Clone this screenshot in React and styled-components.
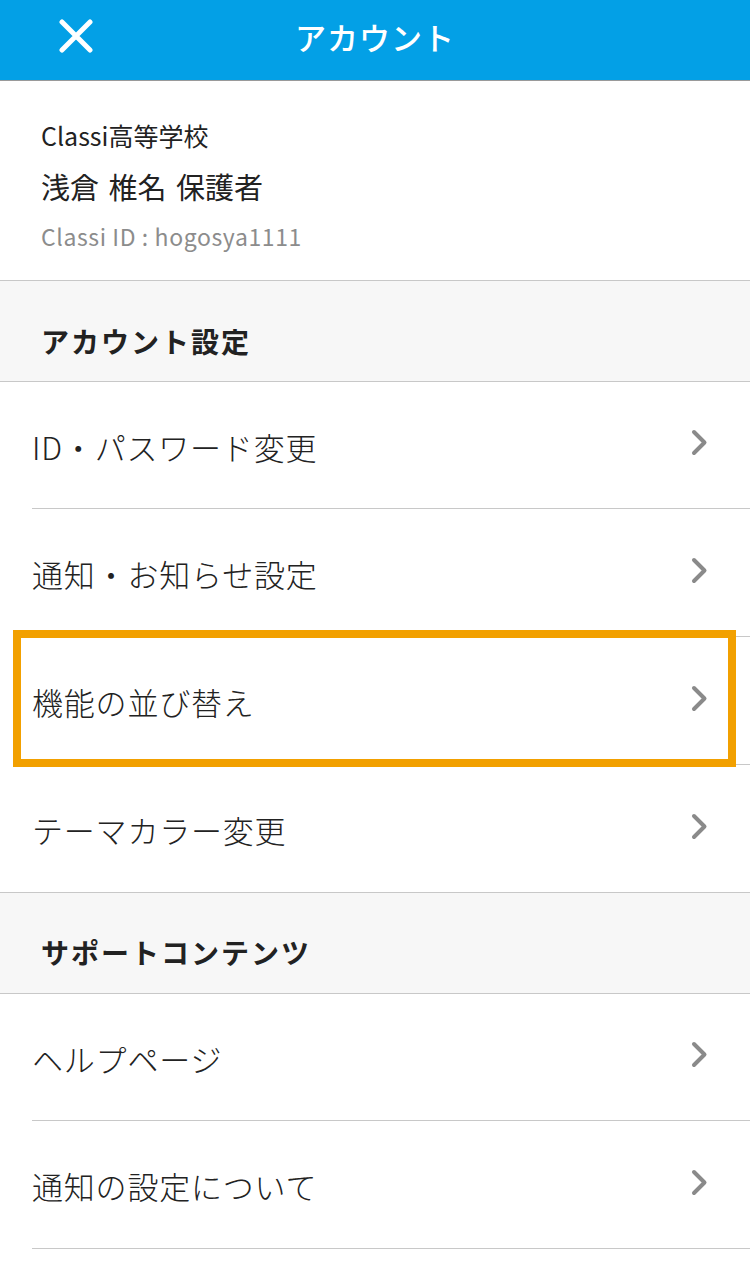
import React from 'react'
import styled, { createGlobalStyle } from 'styled-components'

const GlobalStyle = createGlobalStyle`
  body {
    margin: 0;
    background: #fff;
    font-family: "Noto Sans CJK JP", "Noto Sans", sans-serif;
    color: #222;
  }
`

const Page = styled.div`
  width: 750px;
  min-height: 1286px;
  background: #fff;
`

const TopBar = styled.header`
  height: 81px;
  box-sizing: border-box;
  padding-bottom: 8px;
  background: #03a0e6;
  border-bottom: 1px solid #9a9a9a;
  display: grid;
  grid-template-columns: 150px 1fr 150px;
  align-items: center;
`

const CloseButton = styled.button`
  border: 0;
  background: none;
  padding: 0;
  margin-left: 58px;
  width: 36px;
  height: 36px;
  display: flex;
  align-items: center;
  justify-content: center;
`

const Title = styled.h1`
  margin: 0;
  text-align: center;
  color: #fff;
  font-size: 31px;
  font-weight: 500;
  letter-spacing: 1px;
`

const Profile = styled.section`
  height: 200px;
  box-sizing: border-box;
  padding: 38px 41px 0;
  border-bottom: 1px solid #c8c8c8;
  display: flex;
  flex-direction: column;
`

const School = styled.div`
  font-size: 25px;
  line-height: 32px;
  color: #222;
`

const Name = styled.div`
  margin-top: 17px;
  font-size: 29px;
  line-height: 36px;
  word-spacing: 3px;
  color: #222;
`

const AccountId = styled.div`
  margin-top: 16px;
  font-size: 23px;
  line-height: 32px;
  letter-spacing: 0.6px;
  color: #8c8c8c;
`

const SectionHeader = styled.h2`
  margin: 0;
  height: ${p => (p.$topLine ? 102 : 101)}px;
  box-sizing: border-box;
  padding: ${p => p.$shift}px 41px 0;
  background: #f7f7f7;
  border-top: ${p => (p.$topLine ? '1px solid #c8c8c8' : '0')};
  border-bottom: 1px solid #c8c8c8;
  display: flex;
  align-items: center;
  font-size: 28px;
  font-weight: 700;
  letter-spacing: 2px;
  color: #222;
`

const List = styled.ul`
  margin: 0;
  padding: 0;
  list-style: none;
`

const Row = styled.li`
  position: relative;
  height: 128px;
  box-sizing: border-box;
  margin-left: 32px;
  padding: 2px 40px 0 0;
  border-bottom: 1px solid #c8c8c8;
  display: flex;
  align-items: center;
  justify-content: space-between;

  &:first-child {
    height: 127px;
  }

  &:last-child {
    border-bottom: ${p => (p.$open ? '1px solid #c8c8c8' : '0')};
    height: ${p => (p.$open ? 128 : 127)}px;
  }
`

const Label = styled.span`
  font-size: 31px;
  font-weight: 300;
  letter-spacing: 0.8px;
  color: #222;
`

// orange focus frame drawn over the selected row
const Highlight = styled.div`
  position: absolute;
  left: -19px;
  right: 14px;
  top: -7px;
  bottom: -3px;
  border: 8px solid #f2a000;
  pointer-events: none;
`

const ChevronSvg = styled.svg`
  flex: none;
  margin-top: -4px;
`

const Chevron = () => (
  <ChevronSvg width="20" height="30" viewBox="0 0 20 30">
    <path
      d="M4 3 L14.5 13.5 L4 24"
      fill="none"
      stroke="#8a8a8a"
      strokeWidth="4"
      strokeLinecap="round"
      strokeLinejoin="round"
    />
  </ChevronSvg>
)

const accountItems = [
  { label: 'ID・パスワード変更' },
  { label: '通知・お知らせ設定' },
  { label: '機能の並び替え', marked: true },
  { label: 'テーマカラー変更' },
]

const supportItems = [
  { label: 'ヘルプページ' },
  { label: '通知の設定について' },
]

export default function App() {
  return (
    <Page>
      <GlobalStyle />
      <TopBar>
        <CloseButton aria-label="閉じる">
          <svg width="34" height="34" viewBox="0 0 34 34">
            <path
              d="M3 3 L31 31 M31 3 L3 31"
              stroke="#fff"
              strokeWidth="5"
              strokeLinecap="round"
            />
          </svg>
        </CloseButton>
        <Title>アカウント</Title>
        <div />
      </TopBar>

      <Profile>
        <School>Classi高等学校</School>
        <Name>浅倉 椎名 保護者</Name>
        <AccountId>Classi ID : hogosya1111</AccountId>
      </Profile>

      <SectionHeader $shift={20}>アカウント設定</SectionHeader>
      <List>
        {accountItems.map(item => (
          <Row key={item.label}>
            <Label>{item.label}</Label>
            <Chevron />
            {item.marked && <Highlight />}
          </Row>
        ))}
      </List>

      <SectionHeader $topLine $shift={18}>
        サポートコンテンツ
      </SectionHeader>
      <List>
        {supportItems.map(item => (
          <Row key={item.label} $open>
            <Label>{item.label}</Label>
            <Chevron />
          </Row>
        ))}
      </List>
    </Page>
  )
}
